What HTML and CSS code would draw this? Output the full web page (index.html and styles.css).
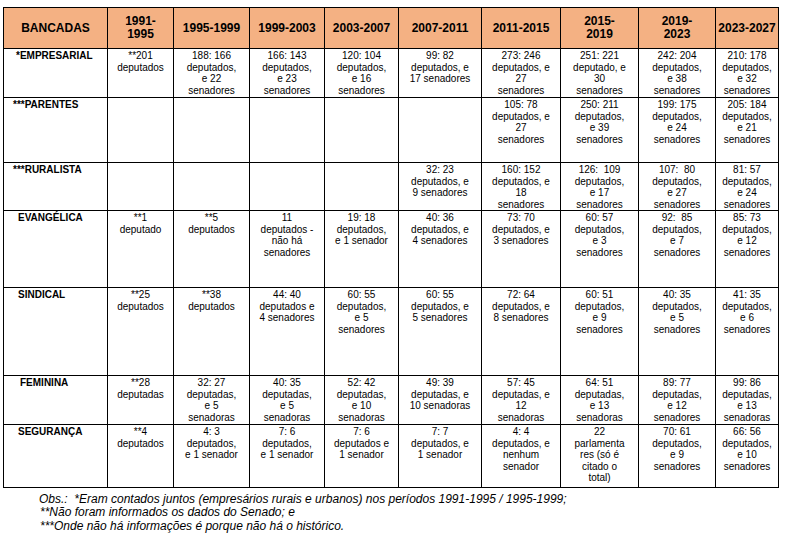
FILE: index.html
```html
<!DOCTYPE html>
<html lang="pt">
<head>
<meta charset="utf-8">
<title>Bancadas</title>
<link rel="stylesheet" href="styles.css">
</head>
<body>
<div class="page">
<table class="tbl">
  <colgroup>
    <col class="c0"><col class="c1"><col class="c2"><col class="c3"><col class="c4"><col class="c5"><col class="c6"><col class="c7"><col class="c8"><col class="c9">
  </colgroup>
  <thead>
    <tr class="r-head">
      <th>BANCADAS</th>
      <th>1991-<br>1995</th>
      <th>1995-1999</th>
      <th>1999-2003</th>
      <th>2003-2007</th>
      <th>2007-2011</th>
      <th>2011-2015</th>
      <th>2015-<br>2019</th>
      <th>2019-<br>2023</th>
      <th>2023-2027</th>
    </tr>
  </thead>
  <tbody>
    <tr class="r1">
      <td class="lbl mid">*EMPRESARIAL</td>
      <td>**201<br>deputados</td>
      <td>188: 166<br>deputados,<br>e 22<br>senadores</td>
      <td>166: 143<br>deputados,<br>e 23<br>senadores</td>
      <td>120: 104<br>deputados,<br>e 16<br>senadores</td>
      <td>99: 82<br>deputados, e<br>17 senadores</td>
      <td>273: 246<br>deputados, e<br>27<br>senadores</td>
      <td>251: 221<br>deputado, e<br>30<br>senadores</td>
      <td>242: 204<br>deputados,<br>e 38<br>senadores</td>
      <td>210: 178<br>deputados,<br>e 32<br>senadores</td>
    </tr>
    <tr class="r2">
      <td class="lbl">***PARENTES</td>
      <td></td><td></td><td></td><td></td><td></td>
      <td>105: 78<br>deputados, e<br>27<br>senadores</td>
      <td>250: 211<br>deputados,<br>e 39<br>senadores</td>
      <td>199: 175<br>deputados,<br>e 24<br>senadores</td>
      <td>205: 184<br>deputados,<br>e 21<br>senadores</td>
    </tr>
    <tr class="r3">
      <td class="lbl">***RURALISTA</td>
      <td></td><td></td><td></td><td></td>
      <td>32: 23<br>deputados, e<br>9 senadores</td>
      <td>160: 152<br>deputados, e<br>18<br>senadores</td>
      <td>126:&nbsp; 109<br>deputados,<br>e 17<br>senadores</td>
      <td>107:&nbsp; 80<br>deputados,<br>e 27<br>senadores</td>
      <td>81: 57<br>deputados,<br>e 24<br>senadores</td>
    </tr>
    <tr class="r4">
      <td class="lbl in">EVANGÉLICA</td>
      <td>**1<br>deputado</td>
      <td>**5<br>deputados</td>
      <td>11<br>deputados -<br>não há<br>senadores</td>
      <td>19: 18<br>deputados,<br>e 1 senador</td>
      <td>40: 36<br>deputados, e<br>4 senadores</td>
      <td>73: 70<br>deputados, e<br>3 senadores</td>
      <td>60: 57<br>deputados,<br>e 3<br>senadores</td>
      <td>92:&nbsp; 85<br>deputados,<br>e 7<br>senadores</td>
      <td>85: 73<br>deputados,<br>e 12<br>senadores</td>
    </tr>
    <tr class="r5">
      <td class="lbl in">SINDICAL</td>
      <td>**25<br>deputados</td>
      <td>**38<br>deputados</td>
      <td>44: 40<br>deputados e<br>4 senadores</td>
      <td>60: 55<br>deputados,<br>e 5<br>senadores</td>
      <td>60: 55<br>deputados, e<br>5 senadores</td>
      <td>72: 64<br>deputados, e<br>8 senadores</td>
      <td>60: 51<br>deputados,<br>e 9<br>senadores</td>
      <td>40: 35<br>deputados,<br>e 5<br>senadores</td>
      <td>41: 35<br>deputados,<br>e 6<br>senadores</td>
    </tr>
    <tr class="r6">
      <td class="lbl in2">FEMININA</td>
      <td>**28<br>deputadas</td>
      <td>32: 27<br>deputadas,<br>e 5<br>senadoras</td>
      <td>40: 35<br>deputadas,<br>e 5<br>senadoras</td>
      <td>52: 42<br>deputadas,<br>e 10<br>senadoras</td>
      <td>49: 39<br>deputadas, e<br>10 senadoras</td>
      <td>57: 45<br>deputadas, e<br>12<br>senadoras</td>
      <td>64: 51<br>deputadas,<br>e 13<br>senadoras</td>
      <td>89: 77<br>deputadas,<br>e 12<br>senadores</td>
      <td>99: 86<br>deputadas,<br>e 13<br>senadoras</td>
    </tr>
    <tr class="r7">
      <td class="lbl in">SEGURANÇA</td>
      <td>**4<br>deputados</td>
      <td>4: 3<br>deputados,<br>e 1 senador</td>
      <td>7: 6<br>deputados,<br>e 1 senador</td>
      <td>7: 6<br>deputados e<br>1 senador</td>
      <td>7: 7<br>deputados, e<br>1 senador</td>
      <td>4: 4<br>deputados, e<br>nenhum<br>senador</td>
      <td>22<br>parlamenta<br>res (só é<br>citado o<br>total)</td>
      <td>70: 61<br>deputados,<br>e 9<br>senadores</td>
      <td>66: 56<br>deputados,<br>e 10<br>senadores</td>
    </tr>
  </tbody>
</table>
<div class="notes">
  <p class="first">Obs.:&nbsp; *Eram contados juntos (empresários rurais e urbanos) nos períodos 1991-1995 / 1995-1999;</p>
  <p>**Não foram informados os dados do Senado; e</p>
  <p>***Onde não há informações é porque não há o histórico.</p>
</div>
</div>
</body>
</html>
```

FILE: styles.css
```css
html, body {
  margin: 0;
  padding: 0;
  background: #ffffff;
}

body {
  font-family: "Liberation Sans", Arial, sans-serif;
  color: #000000;
}

.page {
  padding: 7px 0 0 3px;
}

.tbl {
  border-collapse: collapse;
  table-layout: fixed;
  width: 776px;
}

.c0 { width: 104px; }
.c1 { width: 66px; }
.c2 { width: 76px; }
.c3 { width: 75px; }
.c4 { width: 74px; }
.c5 { width: 83px; }
.c6 { width: 79px; }
.c7 { width: 78px; }
.c8 { width: 77px; }
.c9 { width: 63px; }

.tbl th,
.tbl td {
  border: 1px solid #000000;
  padding: 0;
  white-space: nowrap;
  overflow: hidden;
}

.tbl th {
  background: #f4b183;
  font-size: 12px;
  font-weight: bold;
  line-height: 13px;
  text-align: center;
  vertical-align: middle;
}

.tbl td {
  font-size: 10px;
  line-height: 11.5px;
  text-align: center;
  vertical-align: top;
  padding-top: 1px;
}

.tbl td.lbl {
  text-align: left;
  font-weight: bold;
  padding-left: 9px;
}

.tbl td.lbl.mid { padding-left: 12px; }
.tbl td.lbl.in { padding-left: 14px; }
.tbl td.lbl.in2 { padding-left: 16px; }

.r-head { height: 41px; }
.r1 { height: 49px; }
.r2 { height: 65px; }
.r3 { height: 48px; }
.r4 { height: 77px; }
.r5 { height: 88px; }
.r6 { height: 49px; }
.r7 { height: 63px; }

.notes {
  margin-top: 5px;
  padding-left: 37px;
  font-size: 12px;
  font-style: italic;
  line-height: 13.3px;
}

.notes p {
  margin: 0;
}

.notes p.first {
  margin-left: -1px;
}
```
